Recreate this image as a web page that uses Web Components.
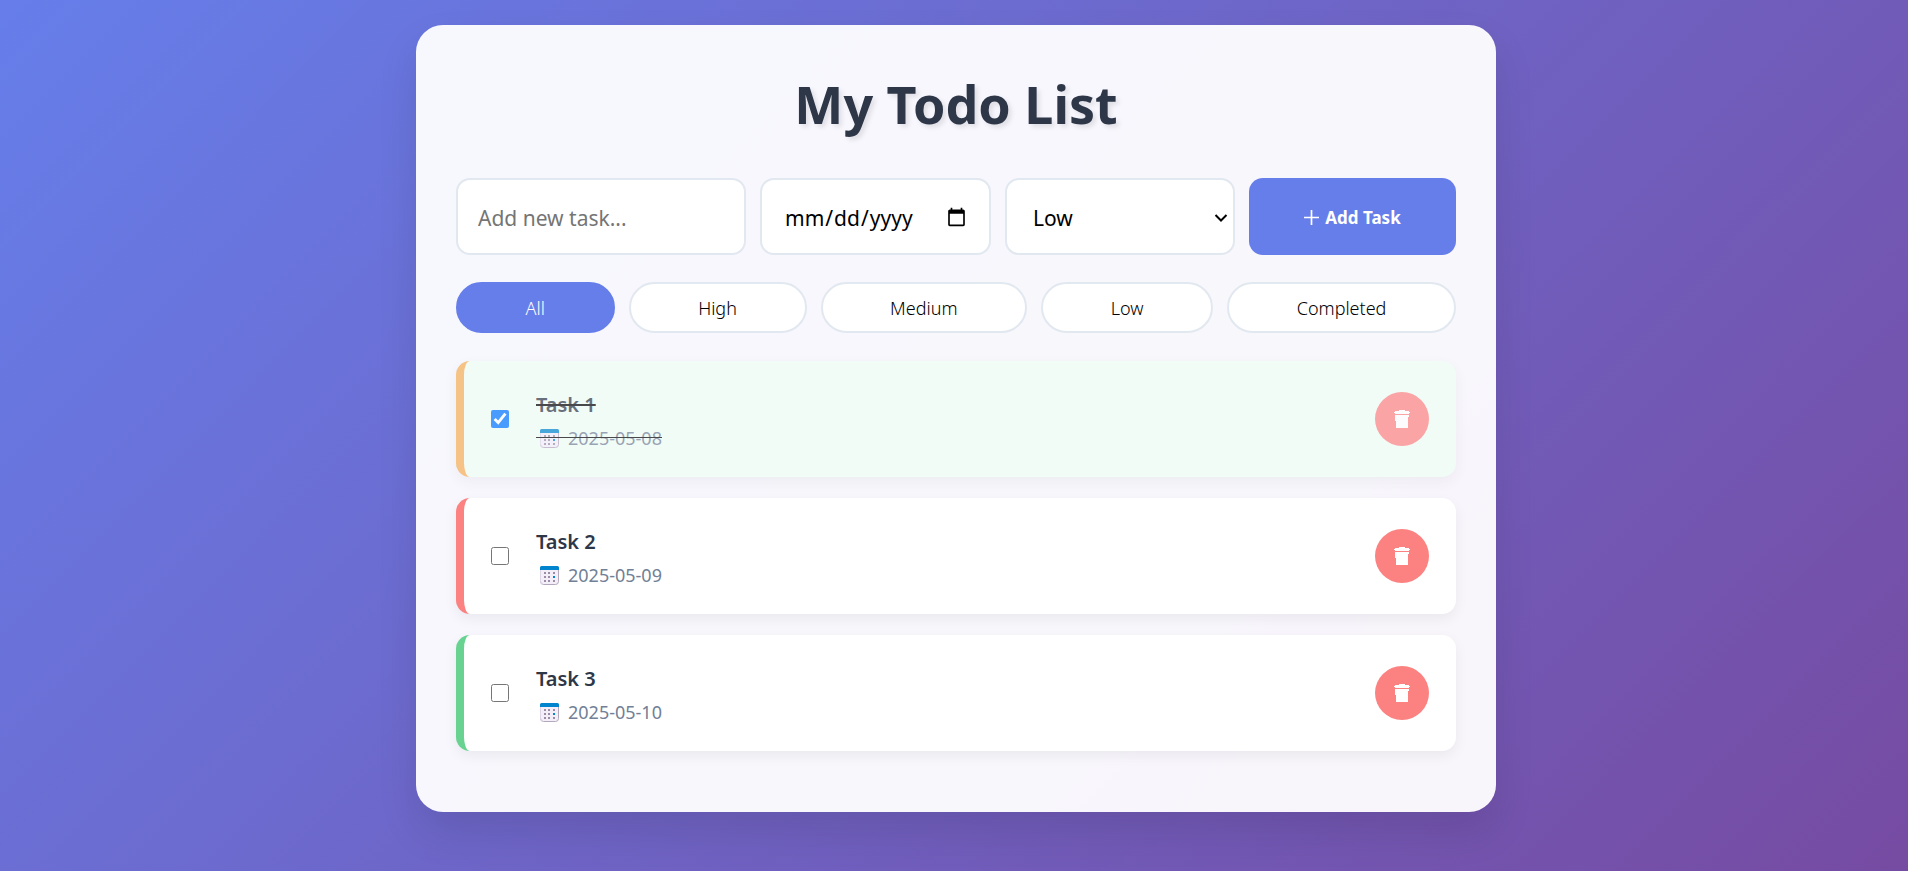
<!DOCTYPE html>
<html lang="en">
<head>
<meta charset="utf-8">
<meta name="viewport" content="width=device-width, initial-scale=1">
<title>My Todo List</title>
<style>
  * { box-sizing: border-box; }
  body {
    margin: 0;
    min-height: 100vh;
    padding: 25px 20px 60px 24px;
    background: linear-gradient(135deg, #667eea 0%, #764ba2 100%);
    font-family: "Noto Sans", "Open Sans", sans-serif;
    color: #2d3748;
  }
</style>
</head>
<body>
<todo-card>
  <span slot="title">My Todo List</span>
  <todo-form></todo-form>
  <todo-filters>
    <todo-filter active>All</todo-filter>
    <todo-filter>High</todo-filter>
    <todo-filter>Medium</todo-filter>
    <todo-filter>Low</todo-filter>
    <todo-filter>Completed</todo-filter>
  </todo-filters>
  <todo-list>
    <todo-item priority="medium" completed date="2025-05-08">Task 1</todo-item>
    <todo-item priority="high" date="2025-05-09">Task 2</todo-item>
    <todo-item priority="low" date="2025-05-10">Task 3</todo-item>
  </todo-list>
</todo-card>

<template id="todo-card">
  <style>
    :host {
      display: block; box-sizing: border-box; max-width: 1080px; margin: 0 auto;
      padding: 40px 40px 61px; border-radius: 27px;
      background: rgba(255, 255, 255, .95);
      box-shadow: 0 20px 40px rgba(0, 0, 0, .1);
    }
    h1 {
      margin: 0 0 36px; font-size: 52px; line-height: 77px; font-weight: 700;
      text-align: center; text-shadow: 3px 3px 5px rgba(0, 0, 0, .1);
    }
    main { display: flex; flex-direction: column; gap: 27px; }
  </style>
  <h1><slot name="title"></slot></h1>
  <main><slot></slot></main>
</template>

<template id="todo-form">
  <style>
    :host { display: block; }
    form { display: grid; grid-template-columns: 290fr 231fr 230fr 207fr; gap: 14px; }
    input, select, button {
      box-sizing: border-box; width: 100%; min-width: 0; height: 77px; margin: 0;
      border: 2px solid #e2e8f0; border-radius: 14px; background: #fff;
      padding: 22px 20px 20px; font: 400 21px/30px "Noto Sans", "Open Sans", sans-serif; color: #000;
    }
    input[type="date"] { padding-left: 22px; }
    .select { position: relative; min-width: 0; }
    select { appearance: none; padding-left: 26px; }
    .select svg { position: absolute; right: 7px; top: 50%; margin-top: -3px; width: 14px; height: 8px; pointer-events: none; }
    button {
      display: flex; align-items: center; justify-content: center; gap: 6px;
      border: 0; background: #667eea; color: #fff; font-size: 17px; font-weight: 700; cursor: pointer;
    }
    button svg { width: 15px; height: 15px; }
  </style>
  <form>
    <input type="text" placeholder="Add new task..." aria-label="New task">
    <input type="date" aria-label="Due date">
    <div class="select">
      <select aria-label="Priority">
        <option selected>Low</option><option>Medium</option><option>High</option>
      </select>
      <svg viewBox="0 0 14 8" fill="none" stroke="#000" stroke-width="2" aria-hidden="true"><path d="M1.500 1 7 6.500 12.500 1"/></svg>
    </div>
    <button type="button">
      <svg viewBox="0 0 15 15" fill="none" stroke="#fff" stroke-width="1.7" aria-hidden="true"><path d="M7.500 0v15M0 7.500h15"/></svg>
      <span>Add Task</span>
    </button>
  </form>
</template>

<template id="todo-filters">
  <style>:host { display: flex; gap: 14px; }</style>
  <slot></slot>
</template>

<template id="todo-filter">
  <style>
    :host { display: block; flex: 1 1 auto; }
    button {
      box-sizing: border-box; width: 100%; height: 51px; padding: 2px 27px 0;
      border: 2px solid #e2e8f0; border-radius: 27px; background: #fff; color: #000;
      font: 300 18px/25px "Noto Sans", "Open Sans", sans-serif; cursor: pointer;
    }
    :host([active]) button { background: #667eea; border-color: #667eea; color: #fff; }
  </style>
  <button type="button"><slot></slot></button>
</template>

<template id="todo-list">
  <style>:host { display: flex; flex-direction: column; gap: 21px; padding-top: 1px; }</style>
  <slot></slot>
</template>

<template id="todo-item">
  <style>
    :host {
      display: flex; align-items: center; gap: 27px; box-sizing: border-box;
      min-height: 116px; padding: 24px 27px; background: #fff;
      border-left: 8px solid #68d391; border-radius: 14px;
      box-shadow: 0 5px 14px rgba(0, 0, 0, .06);
    }
    :host([priority="medium"]) { border-left-color: #f6ad55; }
    :host([priority="high"]) { border-left-color: #fc8181; }
    :host([completed]) { background: #f0fff4; opacity: .7; }
    input { width: 18px; height: 18px; margin: 0; flex: none; }
    .body { flex: 1; display: flex; flex-direction: column; align-items: flex-start; gap: 4px; padding-top: 2px; }
    label { font-size: 20px; line-height: 32px; font-weight: 600; }
    .date {
      position: relative; display: flex; align-items: center; gap: 9px; padding-left: 4px;
      font-size: 18px; line-height: 27px; color: #718096;
    }
    .date svg { width: 19px; height: 19px; }
    :host([completed]) label { text-decoration: line-through #000 2px; }
    :host([completed]) .date::after {
      content: ""; position: absolute; left: 0; right: 0; top: 12px; height: 1px; background: #000;
    }
    button {
      display: grid; place-items: center; flex: none; width: 54px; height: 54px; padding: 0;
      border: 0; border-radius: 50%; background: #fc8181; cursor: pointer;
    }
    button svg { width: 16px; height: 18px; }
  </style>
  <input type="checkbox" id="done">
  <div class="body">
    <label for="done"><slot></slot></label>
    <div class="date">
      <svg viewBox="0 0 19 19" aria-hidden="true">
        <path d="M.5 3v12.500a3 3 0 0 0 3 3h12a3 3 0 0 0 3-3V3z" fill="#f3eef8" stroke="#b4a8bd"/>
        <path d="M.5 3v12.500a2.500 2.500 0 0 0 2.500 2.500" fill="none" stroke="#dcd5e6"/>
        <path d="M0 4V1.500A1.500 1.500 0 0 1 1.500 0h16A1.500 1.500 0 0 1 19 1.500V4z" fill="#0084ce"/>
        <path d="M4 6h2v2H4zM8 6h2v2H8zM13 6h2v2h-2zM4 10h2v2H4zM8 10h2v2H8zM4 14h2v2H4zM8 14h2v2H8zM13 14h2v2h-2z" fill="#998ea4"/>
        <path d="M13 10h2v2h-2z" fill="#0084ce"/>
      </svg>
      <time></time>
    </div>
  </div>
  <button type="button" aria-label="Delete task">
    <svg viewBox="0 0 16 18" fill="#fff" aria-hidden="true"><path d="M5 0h6v1h4v1h1v1h-1v1H1V3H0V2h1V1h4zM1 5h14v2h-1v11H2V11H1z"/></svg>
  </button>
</template>

<script>
  class TemplateElement extends HTMLElement {
    constructor() {
      super();
      const template = document.getElementById(this.localName);
      this.attachShadow({ mode: "open" }).append(template.content.cloneNode(true));
    }
  }
  class TodoCard extends TemplateElement {}
  class TodoForm extends TemplateElement {}
  class TodoFilters extends TemplateElement {}
  class TodoFilter extends TemplateElement {
    connectedCallback() {
      this.shadowRoot.querySelector("button").addEventListener("click", () => {
        for (const other of this.parentElement.children) other.toggleAttribute("active", other === this);
      });
    }
  }
  class TodoList extends TemplateElement {}
  class TodoItem extends TemplateElement {
    connectedCallback() {
      const root = this.shadowRoot;
      const box = root.querySelector("input");
      const time = root.querySelector("time");
      time.textContent = time.dateTime = this.getAttribute("date");
      box.checked = this.hasAttribute("completed");
      box.addEventListener("change", () => this.toggleAttribute("completed", box.checked));
      root.querySelector("button").addEventListener("click", () => this.remove());
    }
  }
  customElements.define("todo-card", TodoCard);
  customElements.define("todo-form", TodoForm);
  customElements.define("todo-filters", TodoFilters);
  customElements.define("todo-filter", TodoFilter);
  customElements.define("todo-list", TodoList);
  customElements.define("todo-item", TodoItem);
</script>
</body>
</html>
